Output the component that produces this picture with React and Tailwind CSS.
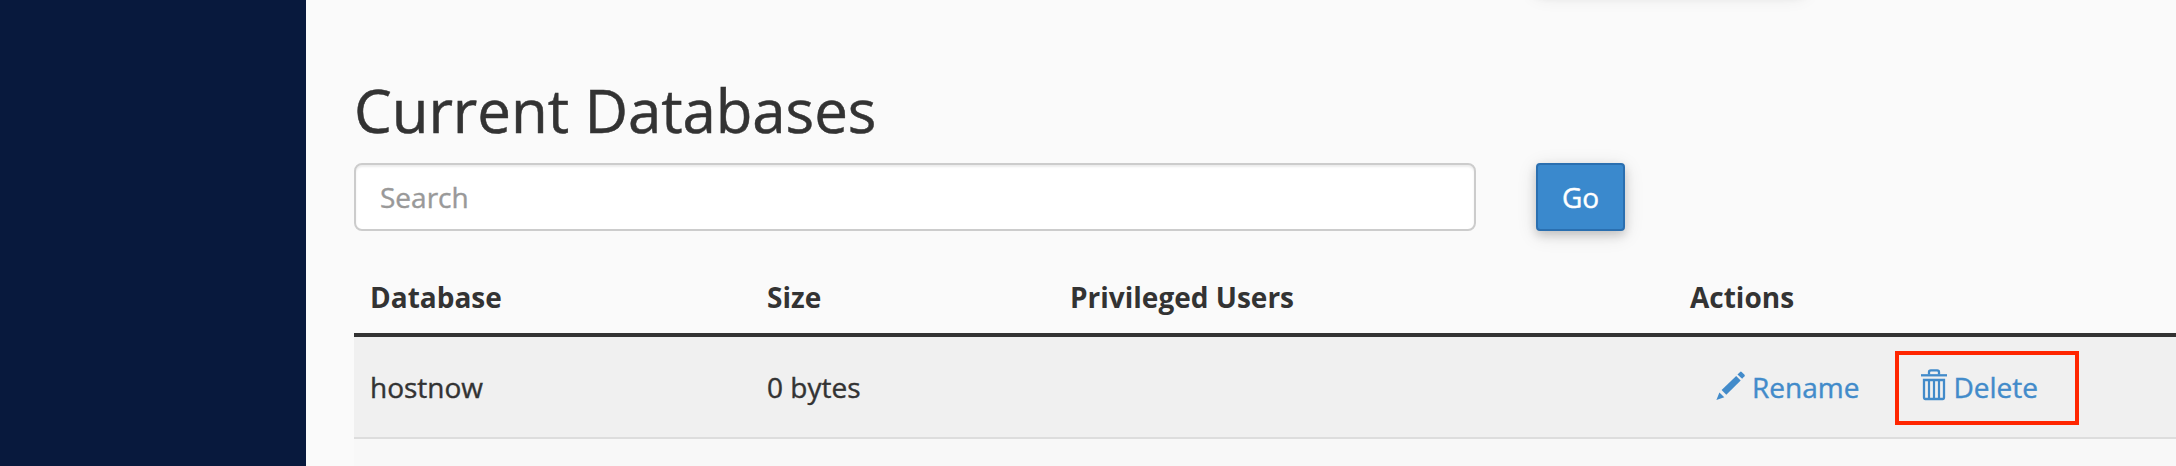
const COLUMNS = "grid grid-cols-[397px_303px_620px_1fr]";

function PencilIcon() {
  return (
    <svg className="mt-[4px] h-[30px] w-[30px] shrink-0" viewBox="0 0 30 30" fill="currentColor" aria-hidden="true">
      <path d="M21.5 3.4 L24.1 0.9 Q24.9 0.2 25.7 0.9 L28.5 3.7 Q29.2 4.5 28.5 5.3 L26.1 7.8 Z" />
      <path d="M20.2 4.9 L24.7 9.4 L10.3 23.8 L5.6 19.1 Z" />
      <path d="M3.4 21.4 L8.3 26.2 L0.4 28.9 Z" />
    </svg>
  );
}

function TrashIcon() {
  return (
    <svg className="mt-[2px] h-[32px] w-[26px] shrink-0" viewBox="0 0 26 32" fill="none" stroke="currentColor" strokeWidth="2.3" aria-hidden="true">
      <path d="M0 6.3 H26" />
      <path d="M8 5.6 V3 Q8 1.4 9.8 1.4 H16.2 Q18 1.4 18 3 V5.6" />
      <path d="M3 11 H23 V28.6 Q23 30 21.6 30 H4.4 Q3 30 3 28.6 Z" />
      <path d="M8 11 V30 M13 11 V30 M18 11 V30" strokeWidth="2.2" />
    </svg>
  );
}

export default function App() {
  return (
    <div className="flex h-[466px] w-[2176px] overflow-hidden bg-[#fafafa] font-['Open_Sans','Noto_Sans',sans-serif] text-[28px] leading-[40px] text-[#333333] [-webkit-text-stroke:0.4px_currentColor]">
      <aside className="w-[306px] shrink-0 bg-[#08193d]" />
      <main className="flex flex-1 flex-col pl-12">
        <div className="ml-[1182px] mt-[-78px] h-[68px] w-[268px] shrink-0 rounded shadow-[0_4px_10px_rgba(0,0,0,0.16),0_4px_20px_rgba(0,0,0,0.12)]" />

        <h1 className="mt-[87px] h-[66px] text-[60px] leading-[66px] tracking-[-0.08px] [-webkit-text-stroke:0.5px_currentColor]">Current Databases</h1>

        <form className="mt-[20px] flex gap-[60px]" onSubmit={(e) => e.preventDefault()}>
          <input
            type="text"
            placeholder="Search"
            className="h-[68px] w-[1122px] rounded-lg border-2 border-[#cccccc] bg-white px-6 shadow-[inset_0_2px_2px_rgba(0,0,0,0.075)] placeholder:text-[#999999]"
          />
          <button
            type="submit"
            className="h-[68px] w-[89px] rounded border-2 border-[#2a6fb0] bg-[#3a89cd] text-white shadow-[0_4px_10px_rgba(0,0,0,0.16),0_4px_20px_rgba(0,0,0,0.12)]"
          >
            Go
          </button>
        </form>

        <section className="mt-[30px] flex-1">
          <div className={`${COLUMNS} border-b-4 border-[#333333] px-4 py-4 font-bold [-webkit-text-stroke:0]`}>
            <span>Database</span>
            <span>Size</span>
            <span>Privileged Users</span>
            <span>Actions</span>
          </div>
          <div className={`${COLUMNS} h-[102px] border-b-2 border-[#dddddd] bg-[#f0f0f0] px-4`}>
            <span className="pt-[30px]">hostnow</span>
            <span className="pt-[30px]">0 bytes</span>
            <span />
            <div className="flex items-start pl-[26px] pt-[14px] text-[#428bca]">
              <a className="flex gap-[6px] pt-4">
                <PencilIcon />
                Rename
              </a>
              <a className="ml-[36px] flex h-[74px] w-[184px] gap-[6px] border-4 border-[#ff2600] pl-[22px] pt-3">
                <TrashIcon />
                Delete
              </a>
            </div>
          </div>
          <div className="h-[27px] bg-[#f8f8f8]" />
        </section>
      </main>
    </div>
  );
}
